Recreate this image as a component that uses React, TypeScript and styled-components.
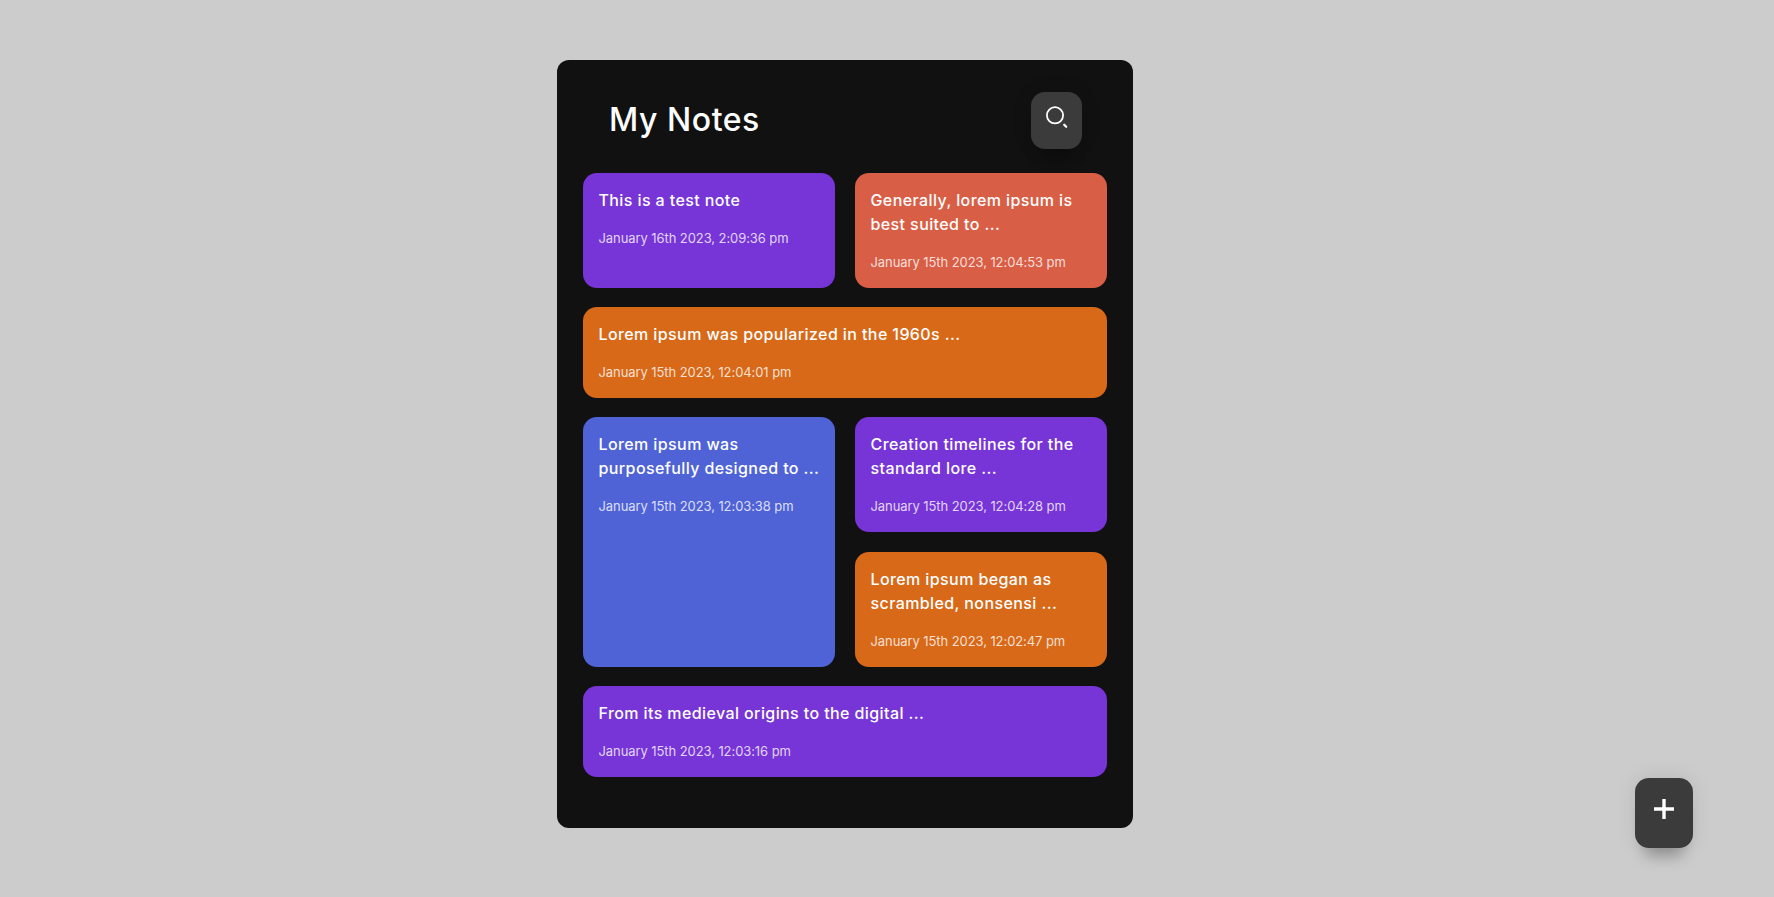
import styled, { createGlobalStyle, css } from "styled-components"

const GlobalStyle = createGlobalStyle`
    * {
        box-sizing: border-box;
    }

    body {
        margin: 0;
        background-color: #cccccc;
        font-family: Inter, "Open Sans", sans-serif;
    }
`

type NoteColor = "purple" | "coral" | "orange" | "blue"

interface Note {
    id: number
    text: string
    date: string
    color: NoteColor
    wide?: boolean
    tall?: boolean
}

const colors: Record<NoteColor, string> = {
    purple: "#7734d6",
    coral: "#d95e46",
    orange: "#d76919",
    blue: "#4f63d7",
}

const notes: Note[] = [
    { id: 1, text: "This is a test note", date: "January 16th 2023, 2:09:36 pm", color: "purple" },
    { id: 2, text: "Generally, lorem ipsum is best suited to ...", date: "January 15th 2023, 12:04:53 pm", color: "coral" },
    { id: 3, text: "Lorem ipsum was popularized in the 1960s ...", date: "January 15th 2023, 12:04:01 pm", color: "orange", wide: true },
    { id: 4, text: "Lorem ipsum was purposefully designed to ...", date: "January 15th 2023, 12:03:38 pm", color: "blue", tall: true },
    { id: 5, text: "Creation timelines for the standard lore ...", date: "January 15th 2023, 12:04:28 pm", color: "purple" },
    { id: 6, text: "Lorem ipsum began as scrambled, nonsensi ...", date: "January 15th 2023, 12:02:47 pm", color: "orange" },
    { id: 7, text: "From its medieval origins to the digital ...", date: "January 15th 2023, 12:03:16 pm", color: "purple", wide: true },
]

export default function App() {
    return (
        <Page>
            <GlobalStyle />
            <Panel>
                <Header>
                    <Title>My Notes</Title>
                    <SearchButton aria-label="Search">
                        <svg width="24" height="24" viewBox="0 0 24 24" fill="none" stroke="#fff">
                            <circle cx="10" cy="9.3" r="8.1" strokeWidth="1.8" />
                            <path d="M19.2 18.7 L21.2 20.8" strokeWidth="2.2" strokeLinecap="round" />
                        </svg>
                    </SearchButton>
                </Header>
                <NotesGrid>
                    {notes.map((note) => (
                        <NoteCard key={note.id} $color={colors[note.color]} $wide={note.wide} $tall={note.tall}>
                            <NoteText>{note.text}</NoteText>
                            <NoteDate>{note.date}</NoteDate>
                        </NoteCard>
                    ))}
                </NotesGrid>
            </Panel>
            <AddButton aria-label="Add note">
                <svg width="20" height="20" viewBox="0 0 20 20" stroke="#fff" strokeWidth="3.4">
                    <path d="M10 0 V20 M0 10 H20" />
                </svg>
            </AddButton>
        </Page>
    )
}

const softShadow = css`
    box-shadow: 0 18px 16px -10px rgba(0, 0, 0, 0.28), 0 0 20px rgba(0, 0, 0, 0.1);
`

const Page = styled.div`
    display: flex;
    justify-content: center;
    min-height: 897px;
    padding: 60px 84px 0 0;
`

const Panel = styled.main`
    width: 576px;
    height: 768px;
    padding: 32px 26px 0;
    background-color: #111111;
    border-radius: 12px;
`

const Header = styled.header`
    display: flex;
    justify-content: space-between;
    align-items: center;
    height: 57px;
    margin-bottom: 24px;
    padding: 0 25px 0 26px;
`

const Title = styled.h1`
    margin: 0 0 2px;
    color: #ffffff;
    font-size: 32px;
    font-weight: 500;
    letter-spacing: 0.55px;
`

const SearchButton = styled.button`
    display: flex;
    justify-content: center;
    align-items: flex-start;
    width: 51px;
    height: 57px;
    padding: 14px 0 0;
    border: 0;
    border-radius: 14px;
    background-color: #3b3b3b;
    ${softShadow}
    cursor: pointer;
`

const NotesGrid = styled.section`
    display: grid;
    grid-template-columns: 252px 252px;
    column-gap: 20px;
    row-gap: 19.2px;
`

const NoteCard = styled.article<{ $color: string; $wide?: boolean; $tall?: boolean }>`
    display: flex;
    flex-direction: column;
    gap: 16px;
    padding: 16px 12px 16px 15.5px;
    border-radius: 14px;
    background-color: ${(props) => props.$color};
    grid-column: ${(props) => (props.$wide ? "span 2" : "auto")};
    grid-row: ${(props) => (props.$tall ? "span 2" : "auto")};
`

const NoteText = styled.p`
    margin: -1px 0 1px;
    color: #ffffff;
    font-size: 16px;
    font-weight: 450;
    line-height: 24px;
    letter-spacing: 0.4px;
`

const NoteDate = styled.span`
    color: rgba(255, 255, 255, 0.8);
    font-size: 13px;
    line-height: 19px;
    letter-spacing: -0.08px;
`

const AddButton = styled.button`
    position: fixed;
    right: 81px;
    bottom: 49px;
    display: flex;
    justify-content: center;
    align-items: center;
    width: 58px;
    height: 70px;
    padding: 0 0 8px;
    border: 0;
    border-radius: 14px;
    background-color: #3b3b3b;
    ${softShadow}
    cursor: pointer;
`
